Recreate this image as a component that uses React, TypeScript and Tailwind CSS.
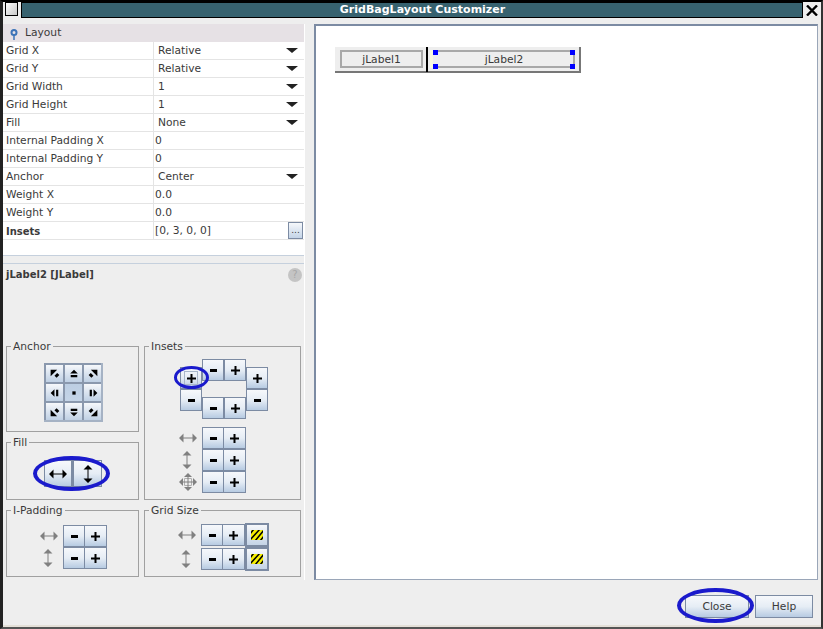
import type { ReactNode } from "react";

const rows: [string, string, boolean, boolean?][] = [
  ["Grid X", "Relative", true],
  ["Grid Y", "Relative", true],
  ["Grid Width", "1", true],
  ["Grid Height", "1", true],
  ["Fill", "None", true],
  ["Internal Padding X", "0", false],
  ["Internal Padding Y", "0", false],
  ["Anchor", "Center", true],
  ["Weight X", "0.0", false],
  ["Weight Y", "0.0", false],
  ["Insets", "[0, 3, 0, 0]", false, true],
];

const btn =
  "flex items-center justify-center border border-[#7c8ba3] bg-gradient-to-b from-[#f6f8fb] via-[#e6edf5] to-[#b7cbe2]";

function Minus() {
  return <div className="h-[3px] w-[7px] bg-black" />;
}

function Plus() {
  return (
    <svg width="9" height="9" viewBox="0 0 9 9">
      <path d="M3.500 0h2v3.500H9v2H5.500V9h-2V5.500H0v-2h3.500z" fill="#000" />
    </svg>
  );
}

function ArrowH({ color = "#808080", w = 18 }: { color?: string; w?: number }) {
  return (
    <svg width={w} height="10" viewBox={`0 0 ${w} 10`}>
      <path d={`M0 5l4.500-4.500v9zM${w} 5l-4.500-4.500v9z`} fill={color} />
      <path d={`M4 5H${w - 4}`} stroke={color} />
    </svg>
  );
}

function ArrowV({ color = "#808080", h = 18 }: { color?: string; h?: number }) {
  return (
    <svg width="10" height={h} viewBox={`0 0 10 ${h}`}>
      <path d={`M5 0l4.500 4.500h-9zM5 ${h}l4.500-4.500h-9z`} fill={color} />
      <path d={`M5 4V${h - 4}`} stroke={color} />
    </svg>
  );
}

function MoveIcon() {
  return (
    <svg width="18" height="18" viewBox="0 0 18 18">
      <path d="M9 0l4 4H5zM9 18l4-4H5zM0 9l4-4v8zM18 9l-4-4v8z" fill="#808080" />
      <path d="M5.500 5.500h7v7h-7z" stroke="#b0b0b0" fill="none" />
      <path d="M9 4v10M4 9h10" stroke="#808080" fill="none" />
    </svg>
  );
}

function Anchor({ d, active }: { d: string; active?: boolean }) {
  return (
    <div
      className={`flex h-[19px] w-[19px] items-center justify-center border-l-2 border-t-2 border-[#8a98ad] bg-gradient-to-b ${
        active ? "from-[#bccee3] to-[#c4d4e7]" : "from-[#f6f8fb] to-[#bfd0e4]"
      }`}
    >
      <svg width="12" height="12" viewBox="0 0 11 11">
        <path d={d} fill="#000" />
      </svg>
    </div>
  );
}

const anchors = [
  "M1.500 1.500h6l-6 6zM7.500 4.500l2 2-2.500 2.500-2-2z",
  "M5.500 1.500l3.500 3.500H2zM2.500 6.500h6v2h-6z",
  "M9.500 1.500v6l-6-6zM3.500 4.500l-2 2 2.500 2.500 2-2z",
  "M1.500 5.500l3.500-3.500v7zM6.500 2.500h2v6h-2z",
  "M4 4h3v3H4z",
  "M9.500 5.500L6 2v7zM2.500 2.500h2v6h-2z",
  "M1.500 9.500v-6l6 6zM7.500 6.500l2-2L7 2 5 4z",
  "M5.500 9.500L9 6H2zM2.500 2.500h6v2h-6z",
  "M9.500 9.500h-6l6-6zM3.500 6.500l-2-2L4 2l2 2z",
];

function Group({ title, className, children }: { title: string; className: string; children: ReactNode }) {
  return (
    <div className={`relative border border-[#a0a0a0] ${className}`}>
      <span className="absolute -top-[7px] left-[4px] bg-[#eeeeee] px-[2px] leading-[14px]">
        {title}
      </span>
      {children}
    </div>
  );
}

function Pair({ className = "" }: { className?: string }) {
  return (
    <div className={`flex ${className}`}>
      <div className={`${btn} h-[22px] w-[22px]`}>
        <Minus />
      </div>
      <div className={`${btn} -ml-px h-[22px] w-[23px]`}>
        <Plus />
      </div>
    </div>
  );
}

function Hatch() {
  return (
    <div className="-my-px flex h-[24px] w-[24px] items-center justify-center border-2 border-[#7c8ba3] bg-gradient-to-b from-[#f6f8fb] to-[#c4d4e7]">
      <svg width="12" height="10" viewBox="0 0 12 10">
        <rect width="12" height="10" fill="#f6f000" />
        <path d="M-1 4L3-1M-1 10L9-1M4 11L13 0M9 11l4-5" stroke="#000" strokeWidth="1.500" />
      </svg>
    </div>
  );
}

export default function App() {
  return (
    <div className="relative flex h-[629px] w-[823px] flex-col overflow-hidden border-b-2 border-l-[3px] border-r-[2px] border-t-2 border-b-[#555] border-l-[#222] border-r-[#333] border-t-black bg-[#eeeeee] font-['DejaVu_Sans',sans-serif] text-[10.7px] text-[#3a3a3a]">
      <div className="flex h-[16px] items-stretch">
        <div className="ml-[2px] h-[14px] w-[13px] border border-black bg-gradient-to-br from-white to-[#c8c8c8]" />
        <div className="ml-[3px] flex h-[16px] w-[782px] items-center justify-center border border-black bg-[#37626f] pl-[21px] text-[11px] font-bold text-white">
          GridBagLayout Customizer
        </div>
        <div className="flex w-[17px] items-center justify-center">
          <svg width="12" height="11" viewBox="0 0 12 11">
            <path d="M1 .500l10 10M11 .500l-10 10" stroke="#000" strokeWidth="2.400" />
          </svg>
        </div>
      </div>

      <div className="mt-[6px] flex flex-1">
        {/* left column */}
        <div className="w-[302px] border-r border-white">
          <div className="h-[231px] bg-white">
            <div className="flex h-[18px] items-center bg-[#e6e1e5] pl-[7px]">
              <svg width="8" height="11" viewBox="0 0 8 11" className="mt-[3px]">
                <circle cx="4" cy="3.500" r="2.500" fill="none" stroke="#3c74b8" strokeWidth="2" />
                <path d="M4 6v5" stroke="#3c74b8" strokeWidth="1.500" />
              </svg>
              <span className="ml-[7px]">Layout</span>
            </div>
            {rows.map(([label, value, combo, bold]) => (
              <div key={label} className="flex h-[18px] items-center border-b border-[#e4e4e4]">
                <div className={`flex h-[17px] w-[151px] items-center border-r border-[#e4e4e4] pl-[3px] pt-[2px] ${bold ? "text-[10px] font-bold" : ""}`}>
                  {label}
                </div>
                <div className={`flex h-[17px] flex-1 items-center justify-between ${combo ? "pl-[4px]" : "pl-[1px]"}`}>
                  <span className="pt-[2px]">{value}</span>
                  {combo && <div className="mr-[6px] h-0 w-0 border-l-[6px] border-r-[6px] border-t-[5px] border-l-transparent border-r-transparent border-t-[#222]" />}
                  {label === "Insets" && (
                    <div className="mr-px flex h-[17px] w-[15px] items-end justify-center border border-[#7c8ba3] bg-gradient-to-b from-[#f6f8fb] to-[#c4d4e7] pb-[3px] text-[9px] leading-[9px]">
                      ...
                    </div>
                  )}
                </div>
              </div>
            ))}
          </div>
          <div className="h-[1px] bg-[#c5d0dd]" />
          <div className="h-[7px]" />
          <div className="h-[1px] bg-[#c5d0dd]" />

          <div className="flex items-center justify-between pl-[3px] pr-[2px] pt-[4px]">
            <span className="text-[10px] font-bold leading-[14px]">jLabel2 [JLabel]</span>
            <div className="flex h-[14px] w-[14px] items-center justify-center rounded-full bg-[#c4c4c4] text-[10px] leading-[14px] text-[#a8a8a8]">?</div>
          </div>

          <div className="ml-[3px] mt-[64px] flex gap-[5px]">
            <div className="flex flex-col gap-[10px]">
              <Group title="Anchor" className="h-[86px] w-[133px] pl-[37px] pt-[16px]">
                <div className="grid w-[59px] grid-cols-3 border-b-2 border-r-2 border-[#a5b2c4]">
                  {anchors.map((d, i) => (
                    <Anchor key={i} d={d} active={i === 4} />
                  ))}
                </div>
              </Group>
              <Group title="Fill" className="h-[58px] w-[133px] pl-[37px] pt-[17px]">
                <div className="flex">
                  <div className={`${btn} h-[27px] w-[29px] border-r-2`}>
                    <ArrowH color="#000" />
                  </div>
                  <div className={`${btn} h-[27px] w-[29px]`}>
                    <ArrowV color="#000" />
                  </div>
                </div>
              </Group>
              <Group title="I-Padding" className="h-[67px] w-[133px] pl-[33px] pt-[14px]">
                <div className="flex items-center gap-[5px]">
                  <ArrowH />
                  <Pair />
                </div>
                <div className="flex items-center gap-[10px] pl-[3px]">
                  <ArrowV />
                  <Pair />
                </div>
              </Group>
            </div>

            <div className="flex flex-col gap-[10px]">
              <Group title="Insets" className="h-[154px] w-[157px]">
                <div className="ml-[35px] mt-[12px] grid grid-cols-[22px_22px_22px_22px] grid-rows-[8px_14px_8px_8px_14px_8px]">
                  <div className={`${btn} col-start-2 row-span-2 row-start-1`}>
                    <Minus />
                  </div>
                  <div className={`${btn} col-start-3 row-span-2 row-start-1`}>
                    <Plus />
                  </div>
                  <div className={`${btn} col-start-1 row-span-2 row-start-2`}>
                    <div className="flex h-[14px] w-[14px] items-center justify-center border border-[#a9b7c9]">
                      <Plus />
                    </div>
                  </div>
                  <div className={`${btn} col-start-1 row-span-2 row-start-4`}>
                    <Minus />
                  </div>
                  <div className={`${btn} col-start-4 row-span-2 row-start-2`}>
                    <Plus />
                  </div>
                  <div className={`${btn} col-start-4 row-span-2 row-start-4`}>
                    <Minus />
                  </div>
                  <div className={`${btn} col-start-2 row-span-2 row-start-5`}>
                    <Minus />
                  </div>
                  <div className={`${btn} col-start-3 row-span-2 row-start-5`}>
                    <Plus />
                  </div>
                </div>
                <div className="ml-[34px] mt-[8px] flex flex-col">
                  <div className="flex items-center gap-[5px]">
                    <ArrowH />
                    <Pair />
                  </div>
                  <div className="flex items-center gap-[10px] pl-[3px]">
                    <ArrowV />
                    <Pair />
                  </div>
                  <div className="flex items-center gap-[5px]">
                    <MoveIcon />
                    <Pair />
                  </div>
                </div>
              </Group>
              <Group title="Grid Size" className="h-[67px] w-[157px] pl-[33px] pt-[13px]">
                <div className="flex items-center">
                  <ArrowH />
                  <Pair className="ml-[5px]" />
                  <Hatch />
                </div>
                <div className="mt-[2px] flex items-center pl-[3px]">
                  <ArrowV />
                  <Pair className="ml-[10px]" />
                  <Hatch />
                </div>
              </Group>
            </div>
          </div>
        </div>

        {/* canvas */}
        <div className="ml-[9px] h-[556px] w-[504px] border-b border-l-2 border-r border-t-2 border-b-[#9aa6b8] border-l-[#7c8ba3] border-r-[#9aa6b8] border-t-[#7c8ba3] bg-white pl-[19px] pt-[21px]">
          <div className="flex h-[26px] w-[246px] items-start border-b-2 border-r-2 border-b-[#777] border-r-[#777] bg-[#eeeeee] pl-[5px] pt-[3px]">
            <div className="flex h-[18px] w-[83px] items-center justify-center border-2 border-[#a8a8a8] pt-[2px]">jLabel1</div>
            <div className="-mt-[3px] ml-[3px] h-[25px] w-[2px] bg-black" />
            <div className="ml-[2px] h-[18px] w-[3px] bg-[#fbfbdf]" />
            <div className="relative flex h-[18px] w-[142px] items-center justify-center border-y-2 border-r-2 border-y-[#a8a8a8] border-r-[#a8a8a8] pl-[2px] pt-[2px]">
              jLabel2
              <div className="absolute -top-[2px] left-0 h-[5px] w-[5px] bg-[#0000ff]" />
              <div className="absolute -top-[2px] right-[-2px] h-[5px] w-[5px] bg-[#0000ff]" />
              <div className="absolute -bottom-[3px] left-0 h-[5px] w-[5px] bg-[#0000ff]" />
              <div className="absolute -bottom-[3px] right-[-2px] h-[5px] w-[5px] bg-[#0000ff]" />
            </div>
          </div>
        </div>
      </div>

      <div className="flex h-[45px] justify-end gap-[6px] pr-[8px] pt-[15px]">
        <div className={`${btn} h-[23px] w-[64px] pt-[2px]`}>Close</div>
        <div className={`${btn} h-[23px] w-[58px] pt-[2px]`}>Help</div>
      </div>
      <div className="h-[2px] bg-[#e4e0d8]" />

      {/* hand-drawn annotation rings */}
      <div className="absolute left-[171px] top-[364px] h-[23px] w-[35px] rounded-[50%] border-[3px] border-[#1a1acc]" />
      <div className="absolute left-[30px] top-[454px] h-[35px] w-[77px] rounded-[50%] border-[4px] border-[#1a1acc]" />
      <div className="absolute left-[674px] top-[586px] h-[35px] w-[77px] rounded-[50%] border-[4px] border-[#1a1acc]" />
    </div>
  );
}
